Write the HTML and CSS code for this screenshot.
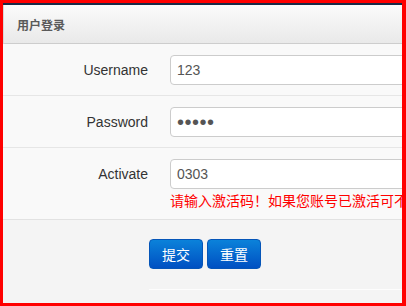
FILE: index.html
```html
<!DOCTYPE html>
<html>
<head>
<meta charset="utf-8">
<link rel="stylesheet" href="styles.css">
</head>
<body>
<div class="frame">
  <div class="panel">
    <div class="panel-head">用户登录</div>
    <form class="form">
      <div class="row">
        <label class="label">Username</label>
        <div class="field"><input class="input" type="text" value="123"></div>
      </div>
      <div class="row">
        <label class="label">Password</label>
        <div class="field"><input class="input input-pass" type="password" value="12345"></div>
      </div>
      <div class="row row-last">
        <label class="label">Activate</label>
        <div class="field">
          <input class="input" type="text" value="0303">
          <div class="error">请输入激活码！如果您账号已激活可不填写此项。</div>
        </div>
      </div>
      <div class="actions">
        <div class="buttons">
          <button class="btn" type="button">提交</button>
          <button class="btn" type="button">重置</button>
        </div>
      </div>
    </form>
  </div>
</div>
</body>
</html>
```
FILE: styles.css
```css
html, body {
  margin: 0;
  padding: 0;
  background: #ffffff;
}
.frame {
  width: 406px;
  height: 306px;
  box-sizing: border-box;
  border: 3px solid #ff0000;
  border-right-width: 4px;
  overflow: hidden;
  background: #f4f4f4;
}
.panel {
  border-top: 2px solid #1a2a48;
}
.panel-head {
  box-sizing: border-box;
  border-bottom: 1px solid #cdcdcd;
  border-left: 1px solid #d8d8d8;
  height: 39px;
  background: linear-gradient(#fbfbfb, #e9e9e9);
  padding-left: 13px;
  display: flex;
  align-items: center;
  font-family: "Noto Sans CJK SC", "Liberation Sans", sans-serif;
  font-weight: bold;
  font-size: 12px;
  color: #5a5a5a;
}
.form {
  margin: 0;
}
.row {
  display: grid;
  grid-template-columns: 145px 1fr;
  column-gap: 22px;
  background: #f9f9f9;
  padding: 11px 0 10px;
  border-bottom: 1px solid #e6e6e6;
}
.row-last {
  padding-bottom: 9px;
  border-bottom: 1px solid #e2e2e2;
}
.label {
  font-family: "Liberation Sans", Arial, sans-serif;
  font-size: 14px;
  color: #333333;
  text-align: right;
  line-height: 30px;
  height: 30px;
}
.field {
  min-width: 0;
}
.input {
  display: block;
  box-sizing: border-box;
  width: 300px;
  height: 30px;
  margin: 0;
  border: 1px solid #cccccc;
  border-radius: 4px;
  background: #ffffff;
  padding: 0 6px;
  font-family: "Liberation Sans", Arial, sans-serif;
  font-size: 14px;
  color: #555555;
  outline: none;
}
.input-pass {
  font-size: 20px;
  letter-spacing: 0.5px;
  padding-left: 6px;
}
.error {
  margin-top: 1px;
  line-height: 20px;
  font-family: "Noto Sans CJK SC", sans-serif;
  font-size: 14px;
  color: #ff0000;
  white-space: nowrap;
}
.actions {
  background: #f4f4f4;
  padding: 19px 0 0 146px;
}
.buttons {
  display: flex;
  gap: 4px;
  padding-bottom: 20px;
  border-bottom: 1px solid #fdfdfd;
}
.btn {
  width: 54px;
  height: 30px;
  box-sizing: border-box;
  border: 1px solid #0555b8;
  border-radius: 4px;
  background: linear-gradient(#0b82da, #0050c2);
  color: #ffffff;
  font-family: "Noto Sans CJK SC", sans-serif;
  font-size: 14px;
  padding: 0;
  line-height: 28px;
}
```
